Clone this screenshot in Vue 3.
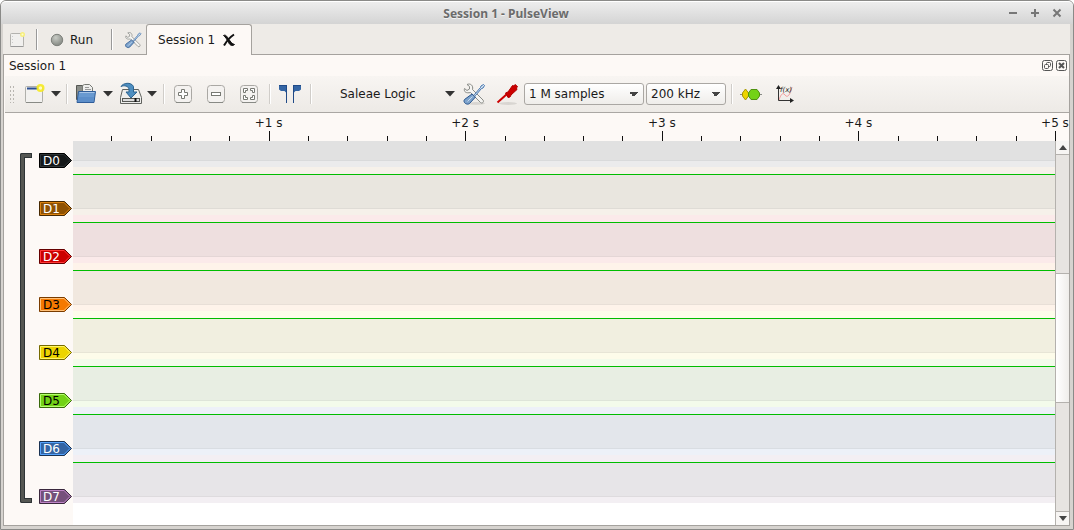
<script setup>
import { ref } from 'vue'

const device = ref('Saleae Logic')
const samples = ref('1 M samples')
const rate = ref('200 kHz')

const channels = [
  { name: 'D0', fill: '#16191a', edge: '#000000', lite: '#2e3436', text: '#ffffff', band: '#e1e1e1', pale: '#ebebec', line: '#d9dadb' },
  { name: 'D1', fill: '#8f5202', edge: '#472901', lite: '#dd8412', text: '#ffffff', band: '#e9e6df', pale: '#f6f1ea', line: '#dfdcd6' },
  { name: 'D2', fill: '#cc0000', edge: '#660000', lite: '#ff3838', text: '#ffffff', band: '#eedfdf', pale: '#fbeaea', line: '#e4d6d6' },
  { name: 'D3', fill: '#f57900', edge: '#7a3c00', lite: '#ffc078', text: '#000000', band: '#f1e8df', pale: '#fef3ea', line: '#e8dfd7' },
  { name: 'D4', fill: '#edd400', edge: '#766a00', lite: '#fff566', text: '#000000', band: '#f1efe0', pale: '#fdfcea', line: '#e7e5d6' },
  { name: 'D5', fill: '#73d216', edge: '#39690b', lite: '#b4ff6c', text: '#000000', band: '#e8eee3', pale: '#f3fbeb', line: '#dee5d9' },
  { name: 'D6', fill: '#3465a4', edge: '#1a3252', lite: '#55a4ff', text: '#ffffff', band: '#e3e6eb', pale: '#edf1f8', line: '#d9dde2' },
  { name: 'D7', fill: '#75507b', edge: '#3a283d', lite: '#bd83c6', text: '#ffffff', band: '#e7e5e8', pale: '#f3eff3', line: '#dedbde' }
]
</script>

<template>
  <div class="window">
    <header class="titlebar">
      <h1>Session 1 - PulseView</h1>
      <div class="winbtns">
        <button aria-label="Minimize"><svg width="10" height="10"><path d="M1 5H9" /></svg></button>
        <button aria-label="Maximize"><svg width="10" height="10"><path d="M1 5H9M5 1V9" /></svg></button>
        <button aria-label="Close"><svg width="10" height="10"><path d="M1.500 1.500L8.500 8.500M8.500 1.500L1.500 8.500" /></svg></button>
      </div>
    </header>

    <nav class="tabs">
      <button class="newtab" aria-label="New session">
        <svg width="16" height="16" viewBox="0 0 16 16"><rect x="1.500" y="1.500" width="13" height="13" rx="1" fill="#f1f0ee" stroke="#b3b2ae" /><path d="M1.500 14.500h13" stroke="#999" /><path d="M3.500 4v9" stroke="#ccc" stroke-dasharray="1 2" /><circle cx="13.500" cy="2.500" r="2.500" fill="#f7ef7d" /><circle cx="13.500" cy="2.500" r="1" fill="#fffccf" /></svg>
      </button>
      <i class="rule"></i>
      <button class="run">
        <svg width="14" height="14" viewBox="0 0 14 14"><defs><radialGradient id="led" cx=".4" cy=".3" r=".7"><stop offset="0" stop-color="#c8cbc5" /><stop offset="1" stop-color="#858983" /></radialGradient></defs><circle cx="7" cy="7" r="5.700" fill="url(#led)" stroke="#7d807b" /></svg>
        Run
      </button>
      <i class="rule"></i>
      <button class="settings" aria-label="Settings">
        <svg width="18" height="18" viewBox="0 0 24 24"><use href="#tools" /></svg>
      </button>
      <button class="tab">
        Session 1
        <svg width="14" height="14" viewBox="0 0 14 14"><path d="M1.500 2.500C4 1 5.500 4.500 7 6.500S10 11 12.500 11.500C10.500 13.500 8 12.500 6.500 9.500S3.500 4 1.500 2.500z" fill="#111" stroke="#111" /><path d="M12 1.500C8 4 5 7.500 2 12.500" fill="none" stroke="#111" stroke-width="2" /></svg>
      </button>
    </nav>

    <main>
      <div class="dock">
        <h2>Session 1</h2>
        <button aria-label="Float"><svg width="11" height="11" viewBox="0 0 11 11"><rect x=".5" y=".5" width="10" height="10" rx="2" /><rect x="4.500" y="2.500" width="4" height="4" rx="1" /><rect x="2.500" y="4.500" width="4" height="4" rx="1" fill="#fdf9f6" /></svg></button>
        <button aria-label="Close dock"><svg width="11" height="11" viewBox="0 0 11 11"><rect x=".5" y=".5" width="10" height="10" rx="2" /><path d="M3 3L8 8M8 3L3 8" stroke-width="2" /></svg></button>
      </div>

      <div class="toolbar">
        <i class="grip"></i>
        <button class="new" aria-label="New">
          <svg width="24" height="24" viewBox="0 0 24 24"><rect x="2.500" y="4.500" width="17" height="16" rx="1" fill="#f2f1ef" stroke="#b0b0ab" /><path d="M3 20.500h16" stroke="#888a85" /><path d="M4 6.500h11" stroke="#2d4f92" stroke-width="2" /><circle cx="17.500" cy="6" r="4" fill="#f6ea20" opacity=".9" /><circle cx="17.500" cy="6" r="1.700" fill="#fffcc0" /></svg>
          <svg class="arrow" width="10" height="6"><path d="M0 0h10L5 5.500z" /></svg>
        </button>
        <i class="sep s1"></i>
        <button class="open" aria-label="Open">
          <svg width="24" height="24" viewBox="0 0 24 24"><path d="M1.500 3.500h7v14h-7z" fill="#8b8e89" stroke="#555753" /><path d="M7.500 13V3.500l2-1h5l3 3V13" fill="#eeeeec" stroke="#777973" /><path d="M10 5.500h4M10 7.500h6" stroke="#999" /><path d="M3.500 9.500h17l-1.500 11H2z" fill="#6899d0" stroke="#2f5d99" /><path d="M4.500 10.500h15" stroke="#a6c4e6" /><path d="M3 15h16l-1 5H2.500z" fill="#4f83c2" opacity=".5" /></svg>
          <svg class="arrow" width="10" height="6"><path d="M0 0h10L5 5.500z" /></svg>
        </button>
        <button class="save" aria-label="Save">
          <svg width="24" height="24" viewBox="0 0 24 24"><path d="M3.500 7.500h16l3 8v6h-21v-6z" fill="#eeeeec" stroke="#60625e" /><rect x="3.500" y="16.500" width="17" height="3" fill="#ddd" stroke="#555753" /><path d="M16.500 16v4" stroke="#111" stroke-width="2" /><path d="M2 4.500C4 1 12-.5 14.500 4.500V10H18l-6 6-5-6h3V7C9.500 4 5 3 2 4.500z" fill="#4e8ec0" stroke="#2d6491" /></svg>
          <svg class="arrow" width="10" height="6"><path d="M0 0h10L5 5.500z" /></svg>
        </button>
        <i class="sep s2"></i>
        <div class="zooms">
          <button aria-label="Zoom in"><svg width="20" height="20" viewBox="0 0 20 20"><rect class="key" x="1.500" y="1.500" width="17" height="17" rx="3" /><path class="base" d="M3 18.500h14" /><path d="M8.500 5.500h3v3h3v3h-3v3h-3v-3h-3v-3h3z" fill="#fff" stroke="#777973" /></svg></button>
          <button aria-label="Zoom out"><svg width="20" height="20" viewBox="0 0 20 20"><rect class="key" x="1.500" y="1.500" width="17" height="17" rx="3" /><path class="base" d="M3 18.500h14" /><rect x="5.500" y="8.500" width="9" height="3" fill="#fff" stroke="#777973" /></svg></button>
          <button aria-label="Zoom to fit"><svg width="20" height="20" viewBox="0 0 20 20"><rect class="key" x="1.500" y="1.500" width="17" height="17" rx="3" /><path class="base" d="M3 18.500h14" /><path d="M4.500 8.500v-4h4v2h-2v2zM15.500 8.500v-4h-4v2h2v2zM4.500 11.500v4h4v-2h-2v-2zM15.500 11.500v4h-4v-2h2v-2z" fill="#fff" stroke="#777973" /></svg></button>
        </div>
        <i class="sep s3"></i>
        <button class="cursors" aria-label="Show cursors">
          <svg width="24" height="24" viewBox="0 0 24 24"><path d="M1 3h8v18H8V10.500L6.500 9H3L1 7.500zM23 3h-8v18h1V10.500L17.500 9H21l2-1.500z" fill="#3465a4" /><path d="M1 3.500h8M15 3.500h8M8.500 3v18M15.500 3v18" stroke="#204a87" /></svg>
        </button>
        <i class="sep s4"></i>
        <button class="device">
          <span>{{ device }}</span>
          <svg class="arrow" width="10" height="6"><path d="M0 0h10L5 5.500z" /></svg>
        </button>
        <button class="config" aria-label="Configure device">
          <svg width="24" height="24" viewBox="0 0 24 24">
            <ellipse cx="14" cy="21.500" rx="9" ry="1.500" fill="#d8d5d1" />
            <g id="tools">
              <path d="M2.500 6.500L5 8.500l2.500-1.500V4.500L5 2.500C8.500 1 11.500 3.500 10.500 7.500L21 18c1.500 2-1 4-2.500 2.500L8.500 10.500C4.500 11.500 1.500 10 2.500 6.500z" fill="#f4f4f2" stroke="#888a85" />
              <path d="M12.500 12.500l6-7 .5-1.500 2.500-1.500 1 1L21 6l-1.500.5-6 7z" fill="#dfeaf5" stroke="#3f71ac" />
              <path d="M10 12l3.500 3-6 6.500c-2.500 2-7-1-5-4z" fill="#7da3cc" stroke="#27548d" />
              <path d="M10.500 14.500L5.500 19.500" stroke="#c5d9ee" />
            </g>
          </svg>
        </button>
        <button class="probe" aria-label="Configure channels">
          <svg width="24" height="24" viewBox="0 0 24 24"><ellipse cx="13" cy="21.500" rx="9" ry="1.500" fill="#d8d5d1" /><path d="M2.500 20.500L12 12" stroke="#c00" stroke-width="2" /><path d="M10.500 11l2.500-1 4.500-6.500 1.500.5 1-1.500 2.500 2-1 1.500.5 1.500-6 5.500-1 2-2 .5z" fill="#c00" stroke="#b00000" /></svg>
        </button>
        <select class="samples" v-model="samples" aria-label="Sample count"><option>1 M samples</option></select>
        <select class="rate" v-model="rate" aria-label="Sample rate"><option>200 kHz</option></select>
        <i class="sep s5"></i>
        <button class="decoder" aria-label="Add decoder">
          <svg width="22" height="14" viewBox="0 0 22 14"><path d="M0 7.500h22" stroke="#888a85" /><path d="M5.500 2L8.500 6v3l-3 4-3-4V6z" fill="#edd400" stroke="#a69500" /><path d="M11 2.500h6L19.500 6v3L17 12.500h-6L8.500 9V6z" fill="#73d216" stroke="#4f9210" /></svg>
        </button>
        <button class="math" aria-label="Add math signal">
          <svg width="18" height="18" viewBox="0 0 18 18"><path d="M3 15C5 9 7 7 9 10s5 1 7-8" fill="none" stroke="#f29a9a" /><path d="M2.500 1v14.500H17" fill="none" stroke="#333" /><path d="M0 4l2.500-4L5 4zM14 13l4 2.500-4 2.500z" fill="#222" /><text x="4" y="7" class="fx">f(x)</text></svg>
        </button>
      </div>

      <div class="view">
        <div class="ruler">
          <div v-for="n in 25" :key="n" class="tick" :class="{ major: n % 5 === 0 }">
            <span v-if="n % 5 === 0">+{{ n / 5 }} s</span>
          </div>
        </div>
        <div class="body">
          <div class="margin">
            <div class="bracket"></div>
            <div class="tags">
              <button v-for="c in channels" :key="c.name" class="tag" :style="{ color: c.text }">
                <svg width="34" height="15" viewBox="0 0 34 15"><path d="M.5 .5H25.500L32.500 7.500L25.500 14.500H.5z" :fill="c.fill" :stroke="c.edge" /><path d="M1.500 1.500H25L31 7.500L25 13.500H1.500z" fill="none" :stroke="c.lite" /></svg>
                <span>{{ c.name }}</span>
              </button>
            </div>
          </div>
          <div class="traces">
            <div v-for="c in channels" :key="c.name" class="trace" :style="{ background: c.pale }">
              <div class="band" :style="{ background: c.band, borderBottomColor: c.line }"></div>
            </div>
          </div>
          <div class="scroll">
            <button aria-label="Scroll up"><svg width="8" height="5"><path d="M0 5L4 0l4 5z" /></svg></button>
            <div class="track"><div class="thumb"></div></div>
            <button aria-label="Scroll down"><svg width="8" height="5"><path d="M0 0h8L4 5z" /></svg></button>
          </div>
        </div>
      </div>
    </main>
  </div>
</template>

<style>
body { background: #fff; }
</style>

<style scoped>
* { box-sizing: border-box; }
.window {
  min-height: 100vh; display: flex; flex-direction: column;
  border: 1px solid #8a8a88; border-radius: 6px 6px 0 0;
  background: #d6d3cf; padding: 0 3px 3px 2px;
  font: 12px/16px "DejaVu Sans", sans-serif; color: #1a1a1a;
}
button { border: 0; background: none; padding: 0; margin: 0; font: inherit; color: inherit; display: flex; align-items: center; flex: none; }
svg { display: block; flex: none; }
h1, h2 { margin: 0; font-size: inherit; font-weight: normal; }
.titlebar {
  height: 23px; margin: 0 -3px 0 -2px; display: flex; align-items: center; position: relative;
  background: linear-gradient(#ededed, #d4d4d4); border-top: 1px solid #fff; border-radius: 5px 5px 0 0;
}
.titlebar h1 { flex: 1; text-align: center; font: bold 12px/16px "Noto Sans", sans-serif; color: #6b6b6b; margin-right: 62px; padding-top: 2px; text-shadow: 0 1px #f2f2f2; }
.winbtns { position: absolute; right: 11px; display: flex; gap: 12px; }
.winbtns path { stroke: #777; stroke-width: 2; fill: none; }
.tabs { height: 31px; display: flex; align-items: center; background: #eeebe7; border-bottom: 1px solid #a5a29e; flex: none; padding: 1px 0 0 6px; }
.tabs .rule { width: 2px; height: 21px; border-left: 1px solid #999; border-right: 1px solid #fff; }
.newtab { margin-right: 11px; }
.run { margin: 0 18px 0 12px; gap: 6px; }
.settings { margin: 0 4px 0 11px; }
.tab { height: 31px; width: 106px; align-self: flex-start; margin-top: -1px; padding: 0 0 0 11px; gap: 7px; background: #fdf9f6; border: 1px solid #a5a29e; border-bottom: 0; border-radius: 3px 3px 0 0; }
main { flex: 1; display: flex; flex-direction: column; background: #fdf9f6; border: 1px solid #a5a29e; border-top: 0; min-width: 0; }
.dock { height: 21px; display: flex; align-items: center; gap: 3px; padding: 0 2px 0 5px; }
.dock h2 { flex: 1; }
.dock svg { fill: none; stroke: #555; }
.toolbar { height: 37px; display: flex; align-items: center; background: linear-gradient(#f8f5f2, #edeae6); border-bottom: 1px solid #aaa7a3; margin-left: 1px; padding-left: 4px; flex: none; }
.grip { width: 6px; height: 18px; background: radial-gradient(circle, #b8b5b0 1px, transparent 1px) 0 0 / 3px 4px; margin-right: 8px; }
.arrow { fill: #333; }
.toolbar button .arrow { margin-left: 4px; }
.sep { width: 2px; height: 20px; border-left: 1px solid #d0cdc9; border-right: 1px solid #fff; flex: none; }
.s1 { margin: 0 7px 0 5px; }
.save { margin-left: 6px; }
.s2 { margin: 0 8px 0 6px; }
.zooms { display: flex; gap: 13px; }
.key { fill: #f4f2f0; stroke: #aaa8a4; }
.base { stroke: #888a85; }
.s3 { margin: 0 7px 0 10px; }
.s4 { margin: 0 28px 0 8px; }
.device { width: 115px; justify-content: space-between; }
.config { margin-left: 7px; }
.probe { margin: 0 5px 0 9px; }
select {
  height: 22px; font: inherit; color: inherit; border: 1px solid #aaa7a3; border-radius: 3px; padding: 0 20px 0 4px; margin: 0; appearance: none; flex: none;
  background: linear-gradient(135deg, #444 50%, transparent 50%) right 4px center / 5px 5px no-repeat, linear-gradient(225deg, #444 50%, transparent 50%) right 9px center / 5px 5px no-repeat, linear-gradient(#fff, #efedea);
}
.samples { width: 120px; }
.rate { width: 80px; margin-left: 2px; }
.s5 { margin: 0 7px 0 5px; }
.math { margin-left: 14px; }
.fx { font: italic 7px "DejaVu Sans", sans-serif; fill: #222; }
.view { flex: 1; display: flex; flex-direction: column; overflow: hidden; }
.ruler { height: 28px; flex: none; display: grid; grid-template-columns: repeat(25, minmax(0, 1fr)); margin: 0 13px 0 69px; align-items: end; }
.tick { height: 5px; border-right: 1px solid #111; position: relative; }
.tick.major { height: 10px; }
.tick span { position: absolute; right: -20px; width: 40px; bottom: 10px; text-align: center; white-space: nowrap; }
.body { flex: 1; display: flex; min-height: 0; }
.margin { width: 69px; flex: none; display: flex; padding: 12px 0 0 16px; align-items: flex-start; }
.bracket { position: relative; width: 12px; height: 350px; border: 4px solid #555753; border-right: 0; outline: 1px solid #2e3436; outline-offset: -1px; border-width: 5px 0 5px 5px; border-radius: 2px 0 0 2px; clip-path: polygon(0 0, 100% 0, 100% 5px, 5px 5px, 5px 345px, 100% 345px, 100% 100%, 0 100%); }
.bracket::after { content: ""; position: absolute; inset: -1px 0 -1px -1px; border: 1px solid #2e3436; border-right: 0; }
.tags { margin-left: 7px; display: flex; flex-direction: column; gap: 33px; }
.tag { position: relative; width: 34px; height: 15px; }
.tag span { position: absolute; left: 4px; top: 0; }
.traces { flex: 1; background: #fff; min-width: 0; overflow: hidden; }
.trace { height: 48px; padding-top: 7px; }
.band { height: 35px; border-top: 1px solid #00bd00; border-bottom: 1px solid; }
.trace:first-child { height: 26px; padding: 0; }
.trace:first-child .band { height: 20px; border-top: 0; }
.scroll { width: 14px; flex: none; display: flex; flex-direction: column; border-left: 1px solid #b4b1ad; background: #e7e4e1; }
.scroll button { height: 13px; justify-content: center; background: #f7f5f3; }
.scroll svg { fill: #444; }
.track { flex: 1; display: flex; flex-direction: column; border: solid #b4b1ad; border-width: 1px 0; }
.track::before { content: ""; flex: 119; }
.track::after { content: ""; flex: 109; }
.thumb { flex: 130; border: solid #b4b1ad; border-width: 1px 0; background: linear-gradient(90deg, #fff, #efedea); }
</style>
